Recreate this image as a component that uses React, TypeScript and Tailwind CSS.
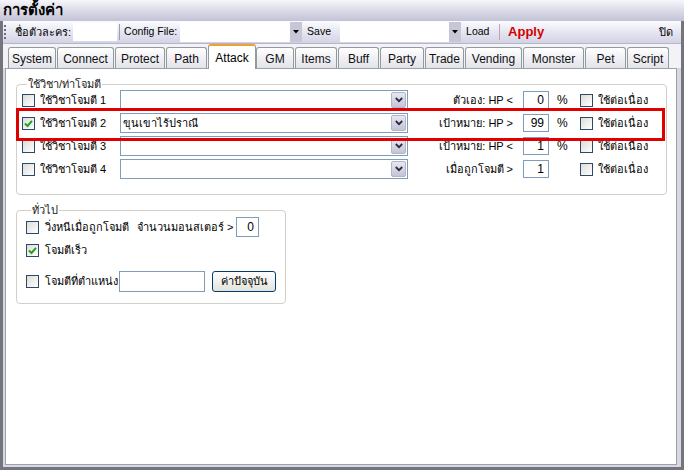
import React from 'react';

const FONT = "Tahoma, 'Liberation Sans', 'DejaVu Sans', 'Noto Sans', sans-serif";

const TABS: { label: string; w: number }[] = [
  { label: 'System', w: 48 },
  { label: 'Connect', w: 57 },
  { label: 'Protect', w: 50 },
  { label: 'Path', w: 41 },
  { label: 'Attack', w: 48 },
  { label: 'GM', w: 38 },
  { label: 'Items', w: 42 },
  { label: 'Buff', w: 41 },
  { label: 'Party', w: 44 },
  { label: 'Trade', w: 39 },
  { label: 'Vending', w: 57 },
  { label: 'Monster', w: 61 },
  { label: 'Pet', w: 41 },
  { label: 'Script', w: 42 },
];

function CheckBox({ checked = false }: { checked?: boolean }) {
  return (
    <div className="w-[13px] h-[13px] shrink-0 border border-[#2c4a68] bg-gradient-to-br from-[#dcdcd7] to-white flex items-center justify-center">
      {checked && (
        <svg width="9" height="9" viewBox="0 0 9 9">
          <path d="M1 4.5 L3.5 7 L8 1.8" fill="none" stroke="#21a121" strokeWidth="2" />
        </svg>
      )}
    </div>
  );
}

function ComboArrow() {
  return (
    <div className="w-[15px] h-[16px] my-[1px] mr-[1px] rounded-[2px] border border-[#b4b4c8] bg-gradient-to-b from-[#e8e8f2] to-[#c4c4d6] flex items-center justify-center">
      <svg width="8" height="6" viewBox="0 0 8 6">
        <path d="M0.8 1 L4 4.2 L7.2 1" fill="none" stroke="#2a2a40" strokeWidth="1.8" />
      </svg>
    </div>
  );
}

function ToolArrow() {
  return (
    <div className="w-[12px] h-[20px] bg-[#c6c6d6] flex items-center justify-center">
      <svg width="6" height="4" viewBox="0 0 6 4"><path d="M0 0 H6 L3 3.5 Z" fill="#000" /></svg>
    </div>
  );
}

function NumBox({ value, className = '' }: { value: string; className?: string }) {
  return (
    <div className={`border border-[#7f9db9] bg-white text-right pr-[4px] text-[12px] text-black ${className}`}>
      {value}
    </div>
  );
}

type Row = { n: number; skill: string; hpLabel: string; hp: string; pct: boolean; checked: boolean };

const ROWS: Row[] = [
  { n: 1, skill: '', hpLabel: 'ตัวเอง: HP <', hp: '0', pct: true, checked: false },
  { n: 2, skill: 'ขุนเขาไร้ปราณี', hpLabel: 'เป้าหมาย: HP >', hp: '99', pct: true, checked: true },
  { n: 3, skill: '', hpLabel: 'เป้าหมาย: HP <', hp: '1', pct: true, checked: false },
  { n: 4, skill: '', hpLabel: 'เมื่อถูกโจมตี >', hp: '1', pct: false, checked: false },
];

export default function App() {
  return (
    <div
      className="w-[684px] h-[470px] flex flex-col bg-[#ededf3] overflow-hidden relative text-[11px] text-black"
      style={{ fontFamily: FONT }}
    >
      {/* title */}
      <div className="h-[21px] shrink-0 flex items-center px-[3px] font-bold text-[15px] bg-gradient-to-b from-[#f6f6fb] to-[#c2c2d6]">
        การตั้งค่า
      </div>

      <div className="flex-1 flex flex-col border-x-[3px] border-b-[3px] border-[#74747c] bg-[#d8d8e2]">
        {/* toolbar */}
        <div className="h-[23px] shrink-0 flex items-center bg-gradient-to-b from-[#fbfbff] to-[#d2d2e4] border-b border-[#b6b6c8] text-[10.5px]">
          <div className="ml-[1px] w-[2px] h-[14px] flex flex-col justify-between">
            <div className="w-[2px] h-[2px] bg-[#6a6a80]" />
            <div className="w-[2px] h-[2px] bg-[#6a6a80]" />
            <div className="w-[2px] h-[2px] bg-[#6a6a80]" />
            <div className="w-[2px] h-[2px] bg-[#6a6a80]" />
          </div>
          <span className="ml-[9px] whitespace-nowrap text-[11px]">ชื่อตัวละคร:</span>
          <div className="ml-[2px] w-[44px] h-[18px] bg-white" />
          <div className="ml-[2px] w-px h-[16px] bg-[#9a9ab0]" />
          <span className="ml-[4px] w-[56px] whitespace-nowrap">Config File:</span>
          <div className="w-[110px] h-[20px] bg-white" />
          <ToolArrow />
          <span className="ml-[5px] w-[33px]">Save</span>
          <div className="w-[109px] h-[20px] bg-white" />
          <ToolArrow />
          <span className="ml-[5px] w-[33px]">Load</span>
          <div className="w-px h-[16px] bg-[#c8a0a8]" />
          <span className="ml-[8px] text-[13px] font-bold text-[#d40000]">Apply</span>
          <span className="ml-auto mr-[8px] text-[11px]">ปิด</span>
        </div>

        {/* tabs */}
        <div className="h-[24px] shrink-0 flex items-end pl-[5px] bg-[#f3f3f7]">
          {TABS.map((t) =>
            t.label === 'Attack' ? (
              <div
                key={t.label}
                style={{ width: t.w }}
                className="h-[25px] -mb-px relative z-10 bg-white border-x border-[#919b9c] border-t-2 border-t-[#f0a030] rounded-t-[3px] flex items-start justify-center pt-[3px] text-[12px]"
              >
                {t.label}
              </div>
            ) : (
              <div
                key={t.label}
                style={{ width: t.w }}
                className="h-[21px] mr-px pt-[2px] bg-gradient-to-b from-white to-[#e2e2ea] border border-b-0 border-[#919b9c] rounded-t-[3px] flex items-center justify-center text-[12px] text-[#111]"
              >
                {t.label}
              </div>
            )
          )}
        </div>

        {/* panel */}
        <div className="flex-1 bg-white border border-[#9ca0a8] ml-[2px] mr-[4px] mb-[2px] pt-[10px] pl-[10px] pr-[9px]">
          <fieldset className="border border-[#d0d0c8] rounded-[4px] pl-[5px] pb-[15px]">
            <legend className="ml-[5px] px-[1px] leading-[10px] text-[#222]">ใช้วิชา/ท่าโจมตี</legend>
            <div className="mt-[1px] flex flex-col gap-[3px]">
              {ROWS.map((r) => (
                <div key={r.n} className="h-[20px] flex items-center">
                  <CheckBox checked={r.checked} />
                  <span className="ml-[5px] w-[80px] whitespace-nowrap">ใช้วิชาโจมตี {r.n}</span>
                  <div className="w-[288px] h-[20px] border border-[#7f9db9] bg-white flex items-center">
                    <span className="flex-1 pl-[2px] whitespace-nowrap">{r.skill}</span>
                    <ComboArrow />
                  </div>
                  <span className="w-[105px] text-right whitespace-nowrap">{r.hpLabel}</span>
                  <NumBox value={r.hp} className="ml-[10px] w-[26px] h-[18px] leading-[16px]" />
                  <span className="w-[31px] pl-[8px] text-[12px]">{r.pct ? '%' : ''}</span>
                  <CheckBox />
                  <span className="ml-[5px] whitespace-nowrap">ใช้ต่อเนื่อง</span>
                </div>
              ))}
            </div>
          </fieldset>

          <fieldset className="mt-[10px] w-[270px] border border-[#d0d0c8] rounded-[4px] pl-[9px] pb-[11px]">
            <legend className="ml-[5px] px-[1px] leading-[10px] text-[#222]">ทั่วไป</legend>
            <div className="mt-[2px] h-[20px] flex items-center">
              <CheckBox />
              <span className="ml-[6px] w-[92px] whitespace-nowrap">วิ่งหนีเมื่อถูกโจมตี</span>
              <span className="w-[99px] pr-[5px] text-right whitespace-nowrap">จำนวนมอนสเตอร์ &gt;</span>
              <NumBox value="0" className="w-[23px] h-[20px] leading-[18px]" />
            </div>
            <div className="mt-[2px] h-[22px] flex items-center">
              <CheckBox checked />
              <span className="ml-[6px] whitespace-nowrap">โจมตีเร็ว</span>
            </div>
            <div className="mt-[9px] h-[22px] flex items-center">
              <CheckBox />
              <span className="ml-[6px] w-[74px] whitespace-nowrap">โจมตีที่ตำแหน่ง</span>
              <div className="w-[86px] h-[21px] border border-[#7f9db9] bg-white" />
              <button className="ml-[7px] w-[64px] h-[21px] rounded-[3px] border border-[#003c74] bg-gradient-to-b from-white to-[#e3e3dc] text-[11px] leading-[19px]">
                ค่าปัจจุบัน
              </button>
            </div>
          </fieldset>
        </div>
      </div>

      {/* red highlight */}
      <div className="absolute left-[16px] top-[108px] w-[649px] h-[33px] border-[3px] border-[#e00000] pointer-events-none" />
    </div>
  );
}
